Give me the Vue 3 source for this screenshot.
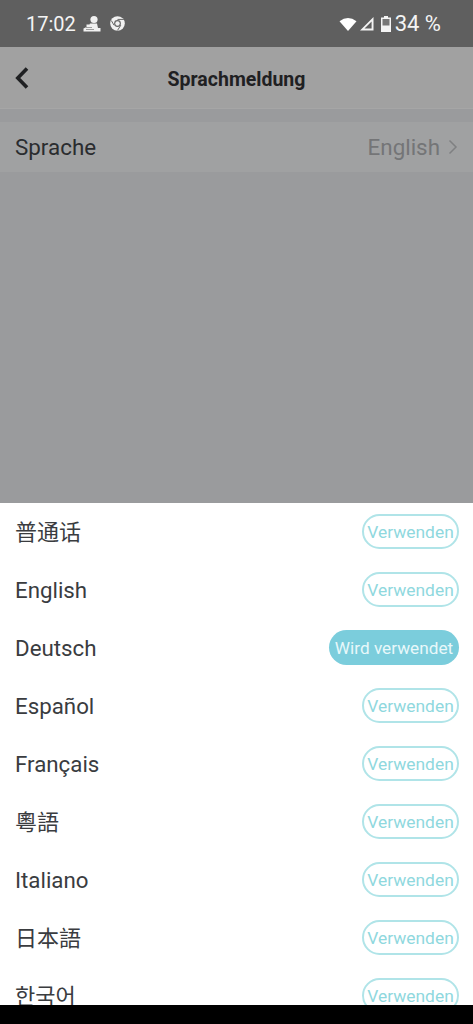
<script setup>
const languages = [
  { name: '普通话', cjk: true },
  { name: 'English' },
  { name: 'Deutsch', active: true },
  { name: 'Español' },
  { name: 'Français' },
  { name: '粵語', cjk: true },
  { name: 'Italiano' },
  { name: '日本語', cjk: true },
  { name: '한국어', cjk: true },
]
</script>

<template>
  <div class="screen">
    <div class="status_bar">
      <div class="status_left">
        <span class="time">17:02</span>
        <svg class="notif_icon" width="18" height="17" viewBox="0 0 18 17">
          <circle cx="11" cy="4.500" r="3.600" fill="#f1f1f1" />
          <path d="M7 8.500h7l1 4.500h2.500v3.500H.5v-3l3-1.500V9.500h3z" fill="#f1f1f1" />
          <path d="M3 12.500h6M3 14.500h8" stroke="#8a8a8a" stroke-width="0.8" />
        </svg>
        <svg class="chrome_icon" width="15" height="15" viewBox="0 0 15 15">
          <circle cx="7.500" cy="7.500" r="7.300" fill="#f1f1f1" />
          <circle cx="7.500" cy="7.500" r="3.400" fill="#666" />
          <circle cx="7.500" cy="7.500" r="2.200" fill="#f1f1f1" />
          <path d="M7.500 3.400h6.300M4 9.200L1.300 4.500M10.800 9.200L7.500 14.400" stroke="#666" stroke-width="1" />
        </svg>
      </div>
      <div class="status_right">
        <svg width="18" height="14" viewBox="0 0 18 14">
          <path d="M0.500 4.200Q9 -2.400 17.500 4.200L9 14z" fill="#fff" />
        </svg>
        <svg class="signal" width="15" height="15" viewBox="0 0 15 15">
          <path d="M14.500 1V14.500H1zM12.600 5.500L5.500 12.600H12.600z" fill="#f4f4f4" fill-rule="evenodd" />
        </svg>
        <svg class="battery" width="10" height="16" viewBox="0 0 10 16">
          <path d="M3 0h4v1.500h3V16H0V1.500h3z" fill="#f4f4f4" />
          <rect x="1.500" y="3" width="7" height="6.500" fill="#777" />
        </svg>
        <span class="percent">34 %</span>
      </div>
    </div>

    <div class="backdrop">
      <div class="nav_bar">
        <svg class="back" width="16" height="24" viewBox="0 0 16 24">
          <path d="M13 2.500L3.800 12l9.200 9.500" fill="none" stroke="#1f2022" stroke-width="3.600" />
        </svg>
        <span class="nav_title">Sprachmeldung</span>
      </div>
      <div class="setting_row">
        <span class="setting_label">Sprache</span>
        <span class="setting_value">English</span>
        <svg width="10" height="16" viewBox="0 0 10 16">
          <path d="M1.500 1.500L8 8l-6.500 6.500" fill="none" stroke="#7f8082" stroke-width="1.500" />
        </svg>
      </div>
    </div>

    <div class="sheet">
      <div v-for="lang in languages" :key="lang.name" class="lang_row">
        <span class="lang_name" :class="{ lang_cjk: lang.cjk }">{{ lang.name }}</span>
        <span v-if="lang.active" class="pill pill_active">Wird verwendet</span>
        <span v-else class="pill">Verwenden</span>
      </div>
    </div>

    <div class="bottom_bar"></div>
  </div>
</template>

<style>
html,
body {
  margin: 0;
  background: #000;
}
</style>

<style scoped>
.screen {
  width: 473px;
  height: 1024px;
  display: flex;
  flex-direction: column;
  overflow: hidden;
  font-family: Roboto, "Noto Sans CJK SC", sans-serif;
}

.status_bar {
  height: 47px;
  flex-shrink: 0;
  display: flex;
  justify-content: space-between;
  align-items: center;
  padding: 0 32px 0 26px;
  background: #5f5f5f;
  color: #f4f4f4;
  font-size: 20px;
}

.status_left,
.status_right {
  display: flex;
  align-items: center;
}

.time {
  margin-right: 7px;
}

.chrome_icon {
  margin-left: 9px;
}

.signal {
  margin-left: 2px;
}

.battery {
  margin-left: 7px;
}

.percent {
  margin-left: 4px;
  font-size: 22px;
}

.backdrop {
  height: 456px;
  flex-shrink: 0;
  background: #9a9b9d;
}

.nav_bar {
  position: relative;
  height: 62px;
  display: flex;
  justify-content: center;
  align-items: center;
  margin-bottom: 13px;
  padding-top: 3px;
  background: #a1a1a1;
  border-bottom: 1px solid #a6a6a6;
  box-sizing: border-box;
}

.back {
  position: absolute;
  left: 14px;
  top: 19px;
}

.nav_title {
  font-size: 19.500px;
  font-weight: 700;
  color: #1f2022;
}

.setting_row {
  height: 50px;
  display: flex;
  align-items: center;
  padding: 0 15px;
  box-sizing: border-box;
  background: #a0a1a2;
}

.setting_label {
  flex: 1;
  font-size: 22.400px;
  color: #2a2c2f;
}

.setting_value {
  margin-right: 8px;
  font-size: 22.400px;
  color: #747577;
}

.sheet {
  flex: 1;
  min-height: 0;
  overflow: hidden;
  background: #fff;
}

.lang_row {
  height: 58px;
  display: flex;
  justify-content: space-between;
  align-items: center;
  padding: 0 14px 0 15px;
}

.lang_name {
  font-size: 22.300px;
  color: #3a3c3f;
}

.lang_cjk {
  font-size: 22px;
  padding-bottom: 4px;
}

.pill {
  width: 97px;
  height: 35px;
  margin-top: -1px;
  box-sizing: border-box;
  display: flex;
  justify-content: center;
  align-items: center;
  border: 2px solid #b0e4e8;
  border-radius: 18px;
  font-size: 17.400px;
  color: #8fd8de;
}

.pill_active {
  width: 130px;
  border: none;
  background: #7bcddc;
  color: #e8f8fa;
  font-size: 17.200px;
}

.bottom_bar {
  height: 19px;
  flex-shrink: 0;
  background: #000;
}
</style>
